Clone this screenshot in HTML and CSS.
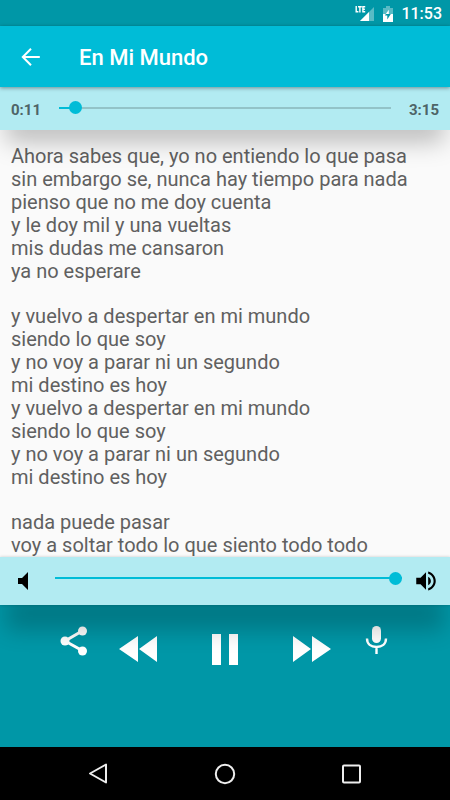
FILE: index.html
```html
<!DOCTYPE html>
<html lang="es">
<head>
<meta charset="utf-8">
<meta name="viewport" content="width=device-width, initial-scale=1">
<title>En Mi Mundo</title>
<link rel="stylesheet" href="styles.css">
</head>
<body>
<div class="status">
  <svg class="signal" width="20" height="16" viewBox="0 0 20 16" aria-label="LTE">
    <path d="M19 1v14H5z" fill="#fff" fill-opacity=".35"/>
    <path d="M14 6v9H5z" fill="#fff"/>
    <path d="M0 0h10.500v7H0z" fill="#0097a7"/>
    <path d="M1.200 0v5.800H3.400M3 .700h3.800M4.900.700v5.800M10.200.700H7.900v5.100h2.300M7.900 3.200h2" fill="none" stroke="#fff" stroke-width="1.400"/>
  </svg>
  <svg class="battery" width="10" height="16" viewBox="0 0 10 16" aria-label="Batería">
    <path d="M3 0h4v2h3v6H0V2h3z" fill="#fff" fill-opacity=".35"/>
    <path d="M0 8h10v8H0z" fill="#fff"/>
    <path d="M4.500 8H7.800L4.300 13.500v-4H2L2.800 8z" fill="#0097a7"/>
    <path d="M5.800 3.800L2.800 8h3z" fill="#fff"/>
  </svg>
  <time>11:53</time>
</div>
<header class="appbar">
  <button class="icon-btn" aria-label="Volver">
    <svg width="24" height="24" viewBox="0 0 24 24"><path d="M20.800 12H4M12 3.800L3.800 12l8.200 8.200" fill="none" stroke="#fff" stroke-width="2"/></svg>
  </button>
  <h1>En Mi Mundo</h1>
</header>
<section class="bar seek">
  <label for="position">0:11</label>
  <input id="position" class="slider slider-position" type="range" min="0" max="100" value="3" aria-valuetext="0:11">
  <span class="total">3:15</span>
</section>
<main class="lyrics">
  <p>Ahora sabes que, yo no entiendo lo que pasa<br>sin embargo se, nunca hay tiempo para nada<br>pienso que no me doy cuenta<br>y le doy mil y una vueltas<br>mis dudas me cansaron<br>ya no esperare</p>
  <p>y vuelvo a despertar en mi mundo<br>siendo lo que soy<br>y no voy a parar ni un segundo<br>mi destino es hoy<br>y vuelvo a despertar en mi mundo<br>siendo lo que soy<br>y no voy a parar ni un segundo<br>mi destino es hoy</p>
  <p>nada puede pasar<br>voy a soltar todo lo que siento todo todo</p>
</main>
<section class="bar volume">
  <label for="volume" aria-label="Volumen">
    <svg width="24" height="24" viewBox="0 0 24 24"><path d="M6 9v6h4l6 6V3l-6 6z"/></svg>
  </label>
  <input id="volume" class="slider slider-volume" type="range" min="0" max="100" value="100">
  <svg class="loud" width="26" height="26" viewBox="0 0 24 24" aria-hidden="true"><path d="M3 9v6h4l5 5V4L7 9H3zm13.500 3c0-1.770-1.020-3.290-2.500-4.030v8.050c1.480-.730 2.500-2.250 2.500-4.020zM14 3.230v2.060c2.890.860 5 3.540 5 6.710s-2.110 5.850-5 6.710v2.060c4.010-.910 7-4.490 7-8.770s-2.990-7.860-7-8.770z"/></svg>
</section>
<footer class="controls">
  <button class="icon-btn raised" aria-label="Compartir">
    <svg width="32" height="36" viewBox="0 0 32 36"><path d="M25 7.500L7 18l18 10" fill="none" stroke="#fff" stroke-width="3"/><circle cx="24.500" cy="8" r="4.500" fill="#fff"/><circle cx="7" cy="18" r="4.500" fill="#fff"/><circle cx="24.500" cy="28" r="4.500" fill="#fff"/></svg>
  </button>
  <button class="icon-btn" aria-label="Retroceder">
    <svg width="40" height="32" viewBox="0 0 40 32"><path d="M19 3v26L0 16zM38 3v26L20 16z" fill="#fff"/></svg>
  </button>
  <button class="icon-btn pause" aria-label="Pausa">
    <svg width="32" height="32" viewBox="0 0 32 32"><path d="M3 1h9v31H3zM20 1h9v31h-9z" fill="#fff"/></svg>
  </button>
  <button class="icon-btn" aria-label="Avanzar">
    <svg width="40" height="32" viewBox="0 0 40 32"><path d="M1 3v26l18-13zM20 3v26l19-13z" fill="#fff"/></svg>
  </button>
  <button class="icon-btn raised" aria-label="Micrófono">
    <svg width="32" height="36" viewBox="0 0 32 36"><rect x="12" y="3" width="9" height="17" rx="4.500" fill="#fff"/><path d="M7 15.500c0 5.500 4 8.500 9.500 8.500s9.500-3 9.500-8.500M16.500 24v7" fill="none" stroke="#fff" stroke-width="2.400"/></svg>
  </button>
</footer>
<nav class="system">
  <button class="icon-btn" aria-label="Atrás"><svg width="24" height="24" viewBox="0 0 24 24"><path d="M20 2.500v18L4 11.500z" fill="none" stroke="#eee" stroke-width="2" stroke-linejoin="round"/></svg></button>
  <button class="icon-btn" aria-label="Inicio"><svg width="24" height="24" viewBox="0 0 24 24"><circle cx="12" cy="12" r="9.200" fill="none" stroke="#eee" stroke-width="2"/></svg></button>
  <button class="icon-btn" aria-label="Recientes"><svg width="24" height="24" viewBox="0 0 24 24"><rect x="3" y="3.500" width="17" height="17" rx="1" fill="none" stroke="#eee" stroke-width="2"/></svg></button>
</nav>
</body>
</html>
```
FILE: styles.css
```css
* {
  box-sizing: border-box;
}

body {
  margin: 0;
  min-height: 100vh;
  display: flex;
  flex-direction: column;
  background: #fafafa;
  color: #606060;
  font-family: Roboto, "Liberation Sans", sans-serif;
}

svg {
  display: block;
}

.icon-btn {
  padding: 0;
  border: 0;
  background: none;
}

.status {
  display: flex;
  align-items: center;
  justify-content: flex-end;
  gap: 8px;
  padding: 6px 8px 4px 0;
  background: #0097a7;
  color: #fff;
  font-size: 16px;
  font-weight: 500;
  line-height: 16px;
}

.appbar {
  position: relative;
  z-index: 2;
  display: flex;
  align-items: center;
  gap: 36px;
  height: 61px;
  padding: 0 19px;
  background: #00bcd7;
  box-shadow: 0 1px 4px rgba(0, 0, 0, 0.4);
}

.appbar h1 {
  margin: 0;
  padding-top: 2px;
  color: #fff;
  font-size: 22px;
  font-weight: 500;
  line-height: 28px;
}

.bar {
  position: relative;
  z-index: 1;
  display: flex;
  align-items: center;
  background: #b2ebf2;
}

.seek {
  gap: 17px;
  height: 43px;
  padding: 2px 11px 0;
  color: #4e6467;
  font-size: 15px;
  font-weight: 700;
  line-height: 20px;
  box-shadow: 0 18px 24px -6px rgba(0, 0, 0, 0.25);
}

.seek label,
.seek .total {
  width: 31px;
  white-space: nowrap;
}

.seek .total {
  text-align: right;
}

.slider {
  flex: 1;
  min-width: 0;
  height: 14px;
  margin: 0 0 4px;
  appearance: none;
  background: linear-gradient(#00bcd7, #00bcd7) center / 100% 2px no-repeat;
}

.slider-position {
  background:
    linear-gradient(#00bcd7, #00bcd7) left center / 12px 2px no-repeat,
    linear-gradient(#93c3c8, #93c3c8) center / 100% 2px no-repeat;
}

.slider::-webkit-slider-thumb {
  appearance: none;
  width: 13px;
  height: 13px;
  border-radius: 50%;
  background: #00bcd7;
}

.lyrics {
  flex: 1;
  padding: 15px 11px 0;
  font-size: 20px;
  line-height: 23px;
}

.lyrics p {
  margin: 0 0 22px;
}

.lyrics p:last-child {
  margin: 0;
}

.volume {
  gap: 11px;
  height: 48px;
  padding: 0 11px 0 12px;
  box-shadow: 0 32px 22px -6px rgba(0, 0, 0, 0.2), 0 0 3px rgba(0, 0, 0, 0.2);
}

.slider-volume {
  margin: 0 0 6px 8px;
}

.controls {
  display: flex;
  align-items: flex-start;
  justify-content: space-between;
  height: 142px;
  padding: 28px 58px 0;
  background: #0097a7;
}

.raised {
  margin-top: -10px;
}

.pause {
  margin: 0 22px;
}

.system {
  display: flex;
  align-items: center;
  justify-content: space-around;
  height: 53px;
  padding: 0 35px;
  background: #000;
}
```
